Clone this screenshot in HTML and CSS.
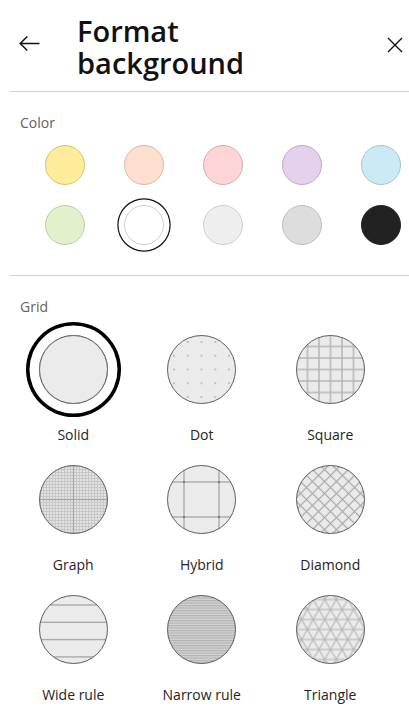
FILE: index.html
```html
<!DOCTYPE html>
<html lang="en">
<head>
<meta charset="utf-8">
<title>Format background</title>
<link rel="stylesheet" href="styles.css">
</head>
<body>
<svg class="defs" width="0" height="0" aria-hidden="true">
  <defs>
    <clipPath id="cc"><circle cx="34.5" cy="34.5" r="34"/></clipPath>
    <pattern id="p-dot" patternUnits="userSpaceOnUse" x="27.625" y="27.625" width="13.75" height="13.75">
      <rect x="6.15" y="6.15" width="1.45" height="1.45" fill="#9e9e9e"/>
    </pattern>
    <pattern id="p-square" patternUnits="userSpaceOnUse" x="28.75" y="28.75" width="11.5" height="11.5">
      <rect x="5.05" y="0" width="1.4" height="11.5" fill="#b2b2b2"/>
      <rect x="0" y="5.05" width="11.5" height="1.4" fill="#b2b2b2"/>
    </pattern>
    <pattern id="p-graph" patternUnits="userSpaceOnUse" x="33" y="33" width="3" height="3">
      <rect x="1.1" y="0" width="0.8" height="3" fill="#c2c2c2"/>
      <rect x="0" y="1.1" width="3" height="0.8" fill="#c2c2c2"/>
    </pattern>
    <pattern id="p-diamond" patternUnits="userSpaceOnUse" x="30.25" y="30.25" width="8.5" height="8.5" patternTransform="rotate(45 34.5 34.5)">
      <rect x="3.65" y="0" width="1.2" height="8.5" fill="#ababab"/>
      <rect x="0" y="3.65" width="8.5" height="1.2" fill="#ababab"/>
    </pattern>
    <pattern id="p-narrow" patternUnits="userSpaceOnUse" x="0" y="0" width="69" height="2.5">
      <rect x="0" y="0" width="69" height="1.2" fill="#b3b3b3"/>
    </pattern>
    <pattern id="p-tri" patternUnits="userSpaceOnUse" x="0" y="29.5" width="10" height="10">
      <rect x="0" y="4.45" width="10" height="1.1" fill="#b3b3b3"/>
    </pattern>
    <pattern id="p-tri60" patternUnits="userSpaceOnUse" x="0" y="29.5" width="10" height="10" patternTransform="rotate(60 34.5 34.5)">
      <rect x="0" y="4.45" width="10" height="1.1" fill="#b3b3b3"/>
    </pattern>
    <pattern id="p-tri120" patternUnits="userSpaceOnUse" x="0" y="29.5" width="10" height="10" patternTransform="rotate(-60 34.5 34.5)">
      <rect x="0" y="4.45" width="10" height="1.1" fill="#b3b3b3"/>
    </pattern>
  </defs>
</svg>

<div class="panel">
  <header class="top">
    <button class="icon-btn back" aria-label="Back">
      <svg width="21" height="16" viewBox="0 0 21 16"><path d="M20.5 7.5H1.2M8.3 0.5L1.2 7.5L8.3 14.5" fill="none" stroke="#111" stroke-width="1.5"/></svg>
    </button>
    <h1 class="title"><span class="title-line">Format</span><span class="title-line">background</span></h1>
    <button class="icon-btn close" aria-label="Close">
      <svg width="16" height="16" viewBox="0 0 16 16"><path d="M1 1L15 15M15 1L1 15" fill="none" stroke="#111" stroke-width="1.4"/></svg>
    </button>
  </header>

  <div class="rule"></div>

  <section class="section colors">
    <h2 class="label">Color</h2>
    <div class="swatches">
      <span class="swatch yellow"></span>
      <span class="swatch peach"></span>
      <span class="swatch pink"></span>
      <span class="swatch purple"></span>
      <span class="swatch blue"></span>
      <span class="swatch green"></span>
      <span class="swatch white selected"></span>
      <span class="swatch light"></span>
      <span class="swatch gray"></span>
      <span class="swatch black"></span>
    </div>
  </section>

  <div class="rule"></div>

  <section class="section grids">
    <h2 class="label">Grid</h2>
    <div class="grid-list">
      <div class="grid-item">
        <span class="preview selected">
          <svg viewBox="0 0 69 69" width="69" height="69"><circle cx="34.5" cy="34.5" r="34" fill="#ebebeb" stroke="#5c5c5c"/></svg>
        </span>
        <span class="name">Solid</span>
      </div>
      <div class="grid-item">
        <span class="preview">
          <svg viewBox="0 0 69 69" width="69" height="69"><circle cx="34.5" cy="34.5" r="34" fill="#ebebeb"/><rect width="69" height="69" fill="url(#p-dot)" clip-path="url(#cc)"/><circle cx="34.5" cy="34.5" r="34" fill="none" stroke="#5c5c5c"/></svg>
        </span>
        <span class="name">Dot</span>
      </div>
      <div class="grid-item">
        <span class="preview">
          <svg viewBox="0 0 69 69" width="69" height="69"><circle cx="34.5" cy="34.5" r="34" fill="#ebebeb"/><rect width="69" height="69" fill="url(#p-square)" clip-path="url(#cc)"/><circle cx="34.5" cy="34.5" r="34" fill="none" stroke="#5c5c5c"/></svg>
        </span>
        <span class="name">Square</span>
      </div>
      <div class="grid-item">
        <span class="preview">
          <svg viewBox="0 0 69 69" width="69" height="69"><circle cx="34.5" cy="34.5" r="34" fill="#e2e2e2"/><g clip-path="url(#cc)"><rect width="69" height="69" fill="url(#p-graph)"/><rect x="33.9" y="0" width="1.2" height="69" fill="#a4a4a4"/><rect x="0" y="33.9" width="69" height="1.2" fill="#a4a4a4"/></g><circle cx="34.5" cy="34.5" r="34" fill="none" stroke="#5c5c5c"/></svg>
        </span>
        <span class="name">Graph</span>
      </div>
      <div class="grid-item">
        <span class="preview">
          <svg viewBox="0 0 69 69" width="69" height="69"><circle cx="34.5" cy="34.5" r="34" fill="#ebebeb"/><g clip-path="url(#cc)" fill="#ababab"><rect x="16.3" y="0" width="1.4" height="69"/><rect x="51.3" y="0" width="1.4" height="69"/><rect x="0" y="16.3" width="69" height="1.4"/><rect x="0" y="51.3" width="69" height="1.4"/><g fill="#7a7a7a"><rect x="16" y="16" width="2" height="2"/><rect x="51" y="16" width="2" height="2"/><rect x="16" y="51" width="2" height="2"/><rect x="51" y="51" width="2" height="2"/></g></g><circle cx="34.5" cy="34.5" r="34" fill="none" stroke="#5c5c5c"/></svg>
        </span>
        <span class="name">Hybrid</span>
      </div>
      <div class="grid-item">
        <span class="preview">
          <svg viewBox="0 0 69 69" width="69" height="69"><circle cx="34.5" cy="34.5" r="34" fill="#ebebeb"/><rect width="69" height="69" fill="url(#p-diamond)" clip-path="url(#cc)"/><circle cx="34.5" cy="34.5" r="34" fill="none" stroke="#5c5c5c"/></svg>
        </span>
        <span class="name">Diamond</span>
      </div>
      <div class="grid-item">
        <span class="preview">
          <svg viewBox="0 0 69 69" width="69" height="69"><circle cx="34.5" cy="34.5" r="34" fill="#ebebeb"/><g clip-path="url(#cc)" fill="#ababab"><rect x="0" y="9.3" width="69" height="1.4"/><rect x="0" y="26.6" width="69" height="1.4"/><rect x="0" y="43.9" width="69" height="1.4"/><rect x="0" y="61.2" width="69" height="1.4"/></g><circle cx="34.5" cy="34.5" r="34" fill="none" stroke="#5c5c5c"/></svg>
        </span>
        <span class="name">Wide rule</span>
      </div>
      <div class="grid-item">
        <span class="preview">
          <svg viewBox="0 0 69 69" width="69" height="69"><circle cx="34.5" cy="34.5" r="34" fill="#d3d3d3"/><rect width="69" height="69" fill="url(#p-narrow)" clip-path="url(#cc)"/><circle cx="34.5" cy="34.5" r="34" fill="none" stroke="#5c5c5c"/></svg>
        </span>
        <span class="name">Narrow rule</span>
      </div>
      <div class="grid-item">
        <span class="preview">
          <svg viewBox="0 0 69 69" width="69" height="69"><circle cx="34.5" cy="34.5" r="34" fill="#ebebeb"/><g clip-path="url(#cc)"><rect width="69" height="69" fill="url(#p-tri)"/><rect x="-20" y="-20" width="109" height="109" fill="url(#p-tri60)"/><rect x="-20" y="-20" width="109" height="109" fill="url(#p-tri120)"/></g><circle cx="34.5" cy="34.5" r="34" fill="none" stroke="#5c5c5c"/></svg>
        </span>
        <span class="name">Triangle</span>
      </div>
    </div>
  </section>
</div>
</body>
</html>
```

FILE: styles.css
```css
* { box-sizing: border-box; }

html, body {
  margin: 0;
  padding: 0;
  background: #ffffff;
}

body {
  font-family: "Open Sans", "Noto Sans", "Liberation Sans", sans-serif;
  color: #242424;
}

.defs {
  display: block;
  width: 0;
  height: 0;
  overflow: hidden;
}

.panel {
  width: 409px;
}

.top {
  display: grid;
  grid-template-columns: 58px 1fr auto;
  align-items: start;
  padding: 15px 6px 12px 19px;
}

.icon-btn {
  display: block;
  margin: 0;
  padding: 0;
  border: 0;
  background: none;
  line-height: 0;
}

.back { margin-top: 21px; justify-self: start; }
.close { margin-top: 22px; }

.title {
  margin: 0;
  font-size: 29px;
  line-height: 32px;
  font-weight: 600;
  color: #111;
}

.title-line {
  display: block;
  height: 32px;
}

.rule {
  height: 1px;
  margin-left: 10px;
  background: #d1d1d1;
}

.section {
  padding-top: 21px;
}

.label {
  margin: 0;
  padding-left: 20px;
  font-size: 14px;
  line-height: 20px;
  font-weight: 400;
  color: #616161;
}

.colors { padding-bottom: 30px; }

.swatches {
  display: grid;
  grid-template-columns: repeat(5, 40px);
  column-gap: 39px;
  row-gap: 20px;
  margin-top: 12px;
  padding-left: 45px;
}

.swatch {
  display: block;
  width: 40px;
  height: 40px;
  border-radius: 50%;
  border: 1px solid;
}

.swatch.yellow { background: #feec9b; border-color: #d5c474; }
.swatch.peach  { background: #fddfd0; border-color: #d8b9aa; }
.swatch.pink   { background: #fdd5d6; border-color: #d4aeae; }
.swatch.purple { background: #e3d1ed; border-color: #bea8ca; }
.swatch.blue   { background: #cceaf5; border-color: #a5c4cf; }
.swatch.green  { background: #e2f1cc; border-color: #bdcba7; }
.swatch.white  { background: #ffffff; border-color: #d0d0d0; }
.swatch.light  { background: #eeeeee; border-color: #cdcdcd; }
.swatch.gray   { background: #dddddd; border-color: #bdbdbd; }
.swatch.black  { background: #222222; border-color: #222222; }

.swatch.selected {
  box-shadow: 0 0 0 5.5px #ffffff, 0 0 0 6.7px #111111;
}

.grid-list {
  display: grid;
  grid-template-columns: repeat(3, 128.5px);
  row-gap: 20px;
  margin-top: 18px;
  padding-left: 9px;
}

.grid-item {
  display: flex;
  flex-direction: column;
  align-items: center;
}

.preview {
  display: block;
  width: 69px;
  height: 69px;
  border-radius: 50%;
  line-height: 0;
}

.preview svg { display: block; }

.preview.selected {
  box-shadow: 0 0 0 9.5px #ffffff, 0 0 0 13px #000000;
}

.name {
  margin-top: 21px;
  font-size: 14px;
  line-height: 20px;
  color: #242424;
}
```
